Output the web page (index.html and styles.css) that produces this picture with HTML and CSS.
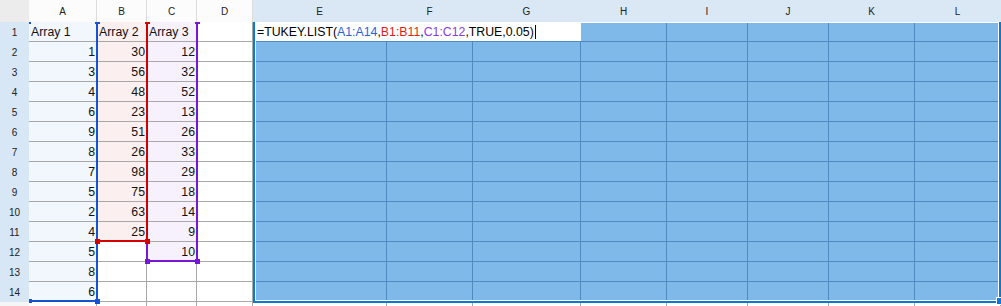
FILE: index.html
```html
<!DOCTYPE html>
<html lang="en">

<head>
    <title>TUKEY.LIST</title>
    <meta charset="UTF-8">
    <meta name="viewport" content="width=device-width, initial-scale=1.0">
    <link rel="stylesheet" href="styles.css">
</head>

<body>
    <div class="sheet">
        <!-- column headers -->
        <div class="corner"></div>
        <div class="ch">A</div>
        <div class="ch">B</div>
        <div class="ch">C</div>
        <div class="ch">D</div>
        <div class="ch on">E</div>
        <div class="ch on">F</div>
        <div class="ch on">G</div>
        <div class="ch on">H</div>
        <div class="ch on">I</div>
        <div class="ch on">J</div>
        <div class="ch on">K</div>
        <div class="ch on">L</div>

        <!-- row 1 -->
        <div class="rh">1</div>
        <div class="c ta">Array 1</div>
        <div class="c tb">Array 2</div>
        <div class="c tc">Array 3</div>
        <div class="c"></div>
        <div class="c active">=TUKEY.LIST(<span class="ref-a">A1:A14</span>,<span class="ref-b">B1:B11</span>,<span class="ref-c">C1:C12</span>,TRUE,0.05)<span class="caret"></span></div>
        <div class="c s"></div><div class="c s"></div><div class="c s"></div><div class="c s"></div><div class="c s"></div>

        <!-- row 2 -->
        <div class="rh">2</div>
        <div class="c n ta">1</div><div class="c n tb">30</div><div class="c n tc">12</div><div class="c"></div>
        <div class="c s"></div><div class="c s"></div><div class="c s"></div><div class="c s"></div><div class="c s"></div><div class="c s"></div><div class="c s"></div><div class="c s"></div>

        <!-- row 3 -->
        <div class="rh">3</div>
        <div class="c n ta">3</div><div class="c n tb">56</div><div class="c n tc">32</div><div class="c"></div>
        <div class="c s"></div><div class="c s"></div><div class="c s"></div><div class="c s"></div><div class="c s"></div><div class="c s"></div><div class="c s"></div><div class="c s"></div>

        <!-- row 4 -->
        <div class="rh">4</div>
        <div class="c n ta">4</div><div class="c n tb">48</div><div class="c n tc">52</div><div class="c"></div>
        <div class="c s"></div><div class="c s"></div><div class="c s"></div><div class="c s"></div><div class="c s"></div><div class="c s"></div><div class="c s"></div><div class="c s"></div>

        <!-- row 5 -->
        <div class="rh">5</div>
        <div class="c n ta">6</div><div class="c n tb">23</div><div class="c n tc">13</div><div class="c"></div>
        <div class="c s"></div><div class="c s"></div><div class="c s"></div><div class="c s"></div><div class="c s"></div><div class="c s"></div><div class="c s"></div><div class="c s"></div>

        <!-- row 6 -->
        <div class="rh">6</div>
        <div class="c n ta">9</div><div class="c n tb">51</div><div class="c n tc">26</div><div class="c"></div>
        <div class="c s"></div><div class="c s"></div><div class="c s"></div><div class="c s"></div><div class="c s"></div><div class="c s"></div><div class="c s"></div><div class="c s"></div>

        <!-- row 7 -->
        <div class="rh">7</div>
        <div class="c n ta">8</div><div class="c n tb">26</div><div class="c n tc">33</div><div class="c"></div>
        <div class="c s"></div><div class="c s"></div><div class="c s"></div><div class="c s"></div><div class="c s"></div><div class="c s"></div><div class="c s"></div><div class="c s"></div>

        <!-- row 8 -->
        <div class="rh">8</div>
        <div class="c n ta">7</div><div class="c n tb">98</div><div class="c n tc">29</div><div class="c"></div>
        <div class="c s"></div><div class="c s"></div><div class="c s"></div><div class="c s"></div><div class="c s"></div><div class="c s"></div><div class="c s"></div><div class="c s"></div>

        <!-- row 9 -->
        <div class="rh">9</div>
        <div class="c n ta">5</div><div class="c n tb">75</div><div class="c n tc">18</div><div class="c"></div>
        <div class="c s"></div><div class="c s"></div><div class="c s"></div><div class="c s"></div><div class="c s"></div><div class="c s"></div><div class="c s"></div><div class="c s"></div>

        <!-- row 10 -->
        <div class="rh">10</div>
        <div class="c n ta">2</div><div class="c n tb">63</div><div class="c n tc">14</div><div class="c"></div>
        <div class="c s"></div><div class="c s"></div><div class="c s"></div><div class="c s"></div><div class="c s"></div><div class="c s"></div><div class="c s"></div><div class="c s"></div>

        <!-- row 11 -->
        <div class="rh">11</div>
        <div class="c n ta">4</div><div class="c n tb">25</div><div class="c n tc">9</div><div class="c"></div>
        <div class="c s"></div><div class="c s"></div><div class="c s"></div><div class="c s"></div><div class="c s"></div><div class="c s"></div><div class="c s"></div><div class="c s"></div>

        <!-- row 12 -->
        <div class="rh">12</div>
        <div class="c n ta">5</div><div class="c"></div><div class="c n tc">10</div><div class="c"></div>
        <div class="c s"></div><div class="c s"></div><div class="c s"></div><div class="c s"></div><div class="c s"></div><div class="c s"></div><div class="c s"></div><div class="c s"></div>

        <!-- row 13 -->
        <div class="rh">13</div>
        <div class="c n ta">8</div><div class="c"></div><div class="c"></div><div class="c"></div>
        <div class="c s"></div><div class="c s"></div><div class="c s"></div><div class="c s"></div><div class="c s"></div><div class="c s"></div><div class="c s"></div><div class="c s"></div>

        <!-- row 14 -->
        <div class="rh">14</div>
        <div class="c n ta">6</div><div class="c"></div><div class="c"></div><div class="c"></div>
        <div class="c s"></div><div class="c s"></div><div class="c s"></div><div class="c s"></div><div class="c s"></div><div class="c s"></div><div class="c s"></div><div class="c s"></div>

        <!-- row 15, cut off -->
        <div class="rh off"></div>
        <div class="c"></div><div class="c"></div><div class="c"></div><div class="c"></div>
        <div class="c"></div><div class="c"></div><div class="c"></div><div class="c"></div><div class="c"></div><div class="c"></div><div class="c"></div><div class="c"></div>

        <!-- range outlines -->
        <div class="mark purple c-right"></div>
        <div class="mark purple c-bottom"></div>
        <div class="mark purple c-left"></div>
        <div class="mark red b-right"></div>
        <div class="mark red b-bottom"></div>
        <div class="mark blue a-right"></div>
        <div class="mark blue a-bottom"></div>

        <div class="mark purple c-tr"></div>
        <div class="mark purple c-bl"></div>
        <div class="mark purple c-br"></div>
        <div class="mark red b-tr"></div>
        <div class="mark red b-bl"></div>
        <div class="mark red b-br"></div>
        <div class="mark blue a-tl"></div>
        <div class="mark blue a-tr"></div>
        <div class="mark blue a-bl"></div>
        <div class="mark blue a-br"></div>

        <!-- selection -->
        <div class="sel-box"></div>
        <div class="sel-handle"></div>
    </div>
</body>

</html>
```

FILE: styles.css
```css
body {
    margin: 0;
    font-family: "Liberation Sans", Arial, sans-serif;
    background: #fff;
}

.sheet {
    position: relative;
    display: grid;
    grid-template-columns: 29px 68px 50px 50px 56px 134px 86px 108px 86px 81px 81px 86px 86px;
    grid-template-rows: 22px repeat(15, 20px);
    width: 1001px;
    height: 306px;
    overflow: hidden;
}

.corner {
    background: #ececec;
}

.ch {
    box-sizing: border-box;
    padding-top: 1px;
    font-size: 10px;
    line-height: 21px;
    color: #222;
    text-align: center;
    background: #fcfcfc;
    border-right: 1px solid #dcdcdc;
}

.ch.on {
    background: #dae8f6;
    border-right-color: #dae8f6;
}

.rh {
    display: flex;
    align-items: center;
    justify-content: center;
    font-size: 10px;
    color: #222;
    background: #d8e7f6;
}

.rh.off {
    background: #f5f5f5;
}

.c {
    box-sizing: border-box;
    padding: 2px 1px 0 2px;
    font-size: 12.3px;
    line-height: 17px;
    color: #111;
    white-space: nowrap;
    border-right: 1px solid #a8a8a8;
    border-bottom: 1px solid #a8a8a8;
}

.n {
    text-align: right;
}

.ta {
    background: #f2f6fd;
}

.tb {
    background: #fcefef;
}

.tc {
    background: #f6f1fc;
}

.s {
    background: #7fb9ea;
    border-color: #4f8ac0;
}

.active {
    grid-column: span 3;
    padding-left: 4px;
    color: #000;
    background: #fff;
    border-right: 0;
    border-bottom-color: #4f8ac0;
}

.ref-a {
    color: #2a62da;
}

.ref-b {
    color: #e01b1b;
}

.ref-c {
    color: #8a39e0;
}

.caret {
    display: inline-block;
    width: 1px;
    height: 14px;
    margin-left: 1px;
    vertical-align: -3px;
    background: #000;
}

/* range outlines */
.mark {
    position: absolute;
}

.blue {
    background: #1553d3;
}

.red {
    background: #d40000;
}

.purple {
    background: #7517d4;
}

.a-right { left: 96px; top: 22px; width: 2px; height: 280px; }
.a-bottom { left: 29px; top: 300px; width: 69px; height: 2px; }
.a-tl { left: 29px; top: 22px; width: 2px; height: 2px; }
.a-tr { left: 95px; top: 22px; width: 5px; height: 2px; }
.a-bl { left: 29px; top: 299px; width: 3px; height: 4px; }
.a-br { left: 95px; top: 299px; width: 5px; height: 5px; }

.b-right { left: 146px; top: 22px; width: 2px; height: 220px; }
.b-bottom { left: 96px; top: 240px; width: 52px; height: 2px; }
.b-tr { left: 145px; top: 22px; width: 5px; height: 2px; }
.b-bl { left: 95px; top: 239px; width: 5px; height: 5px; }
.b-br { left: 145px; top: 239px; width: 5px; height: 5px; }

.c-right { left: 196px; top: 22px; width: 2px; height: 240px; }
.c-bottom { left: 146px; top: 260px; width: 52px; height: 2px; }
.c-left { left: 146px; top: 242px; width: 2px; height: 19px; }
.c-tr { left: 195px; top: 22px; width: 5px; height: 2px; }
.c-bl { left: 145px; top: 259px; width: 5px; height: 5px; }
.c-br { left: 195px; top: 259px; width: 5px; height: 5px; }

/* selected block E1:L14 */
.sel-box {
    position: absolute;
    left: 253px;
    top: 22px;
    width: 748px;
    height: 281px;
    box-sizing: border-box;
    border: 2px solid #0a78d7;
    border-top: 0;
    box-shadow: inset 0 0 0 1px #fff;
}

.sel-handle {
    position: absolute;
    left: 996px;
    top: 297px;
    width: 6px;
    height: 6px;
    background: #0a78d7;
    border: 1px solid #fff;
}
```
